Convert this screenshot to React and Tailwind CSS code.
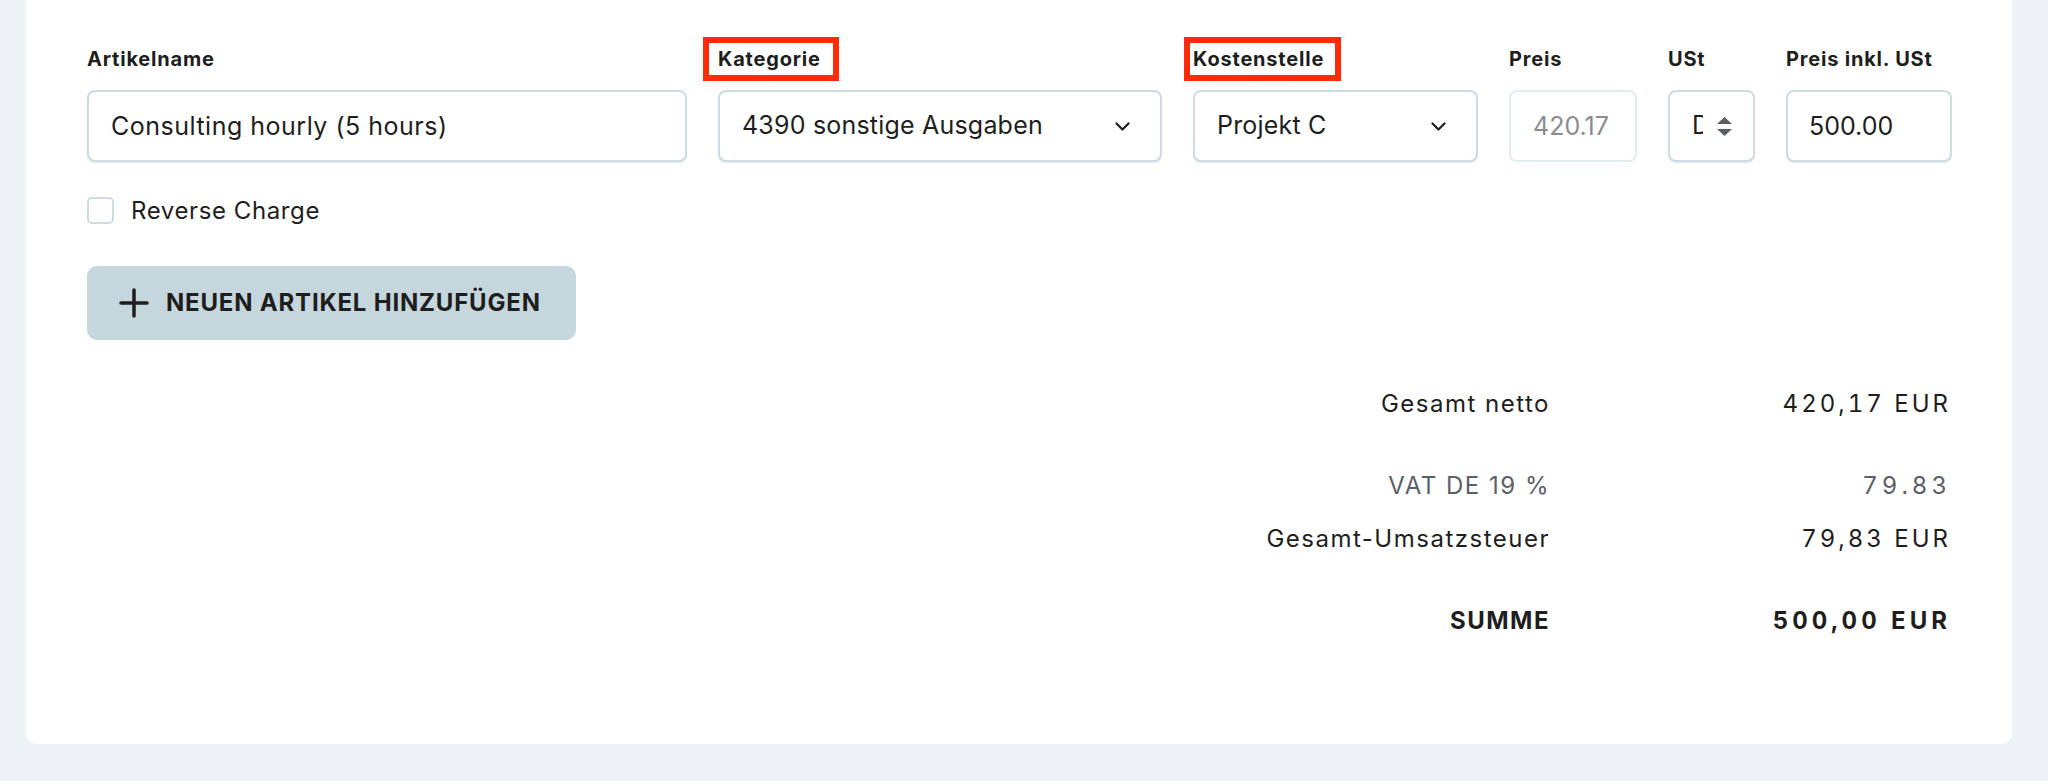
import React from 'react';

const font = { fontFamily: 'Inter, "Open Sans", sans-serif' };

const Chevron = () => (
  <svg width="15" height="9" viewBox="0 0 15 9" fill="none">
    <path d="M1.5 1.5l6 6 6-6" stroke="#1e1e1e" strokeWidth="2.2" strokeLinecap="round" strokeLinejoin="round" />
  </svg>
);

const Label = ({ children, marked, markClass }) => (
  <div className="h-[28px] mb-[17px] flex">
    <span className="relative text-[20px] leading-[28px] font-bold text-[#1e1e1e] tracking-[0.8px]">
      {children}
      {marked && <span className={`absolute -top-[8px] -bottom-[8px] border-[6px] border-[#ff2a06] ${markClass}`} />}
    </span>
  </div>
);

const Field = ({ width, label, marked, markClass, children }) => (
  <div className={`flex flex-col shrink-0 ${width}`}>
    <Label marked={marked} markClass={markClass}>{label}</Label>
    {children}
  </div>
);

const boxClass = 'h-[72px] rounded-[8px] border-2 border-[#cddce1] bg-white shadow-[0_1px_1px_rgba(160,185,195,0.35)]';

const SelectBox = ({ value }) => (
  <div className={`${boxClass} flex items-center justify-between pl-[22px] pr-[30px]`}>
    <span className="text-[25px] text-[#1e1e1e] tracking-[0.2px]">{value}</span>
    <Chevron />
  </div>
);

const TotalRow = ({ label, value, className = '', valueClass = 'tracking-[3px]' }) => (
  <div className={`flex items-center h-[36px] text-[24px] leading-[36px] ${className}`}>
    <div className="flex-1 text-right tracking-[1.5px]">{label}</div>
    <div className={`w-[401px] text-right tabular-nums ${valueClass}`}>{value}</div>
  </div>
);

const App = () => {
  return (
    <div className="w-full h-[781px] bg-[#edf2f5] pl-[26px] pr-[36px]" style={font}>
      <div className="bg-white rounded-b-[10px] h-[744px] pt-[45px] px-[61px]">
        <div className="flex gap-[31px]">
          <Field width="w-[600px]" label="Artikelname">
            <input
              readOnly
              value="Consulting hourly (5 hours)"
              className={`${boxClass} w-full px-[22px] text-[25px] text-[#1e1e1e] tracking-[0.5px] outline-none`}
            />
          </Field>
          <Field width="w-[444px]" label="Kategorie" marked markClass="-left-[15px] -right-[18px]">
            <SelectBox value="4390 sonstige Ausgaben" />
          </Field>
          <Field width="w-[285px]" label="Kostenstelle" marked markClass="-left-[9px] -right-[17px]">
            <SelectBox value="Projekt C" />
          </Field>
          <Field width="w-[128px]" label="Preis">
            <input
              readOnly
              value="420.17"
              className="h-[72px] w-full rounded-[8px] border-2 border-[#e2edf0] bg-white px-[22px] text-[25px] text-[#8c8c8c] outline-none"
            />
          </Field>
          <Field width="w-[87px]" label="USt">
            <div className={`${boxClass} flex items-center pl-[22px] gap-[14px]`}>
              <div className="w-[11px] overflow-hidden text-[25px] text-[#1e1e1e] whitespace-nowrap">DE 19 %</div>
              <svg width="15" height="19" viewBox="0 0 15 19">
                <path d="M7.5 0L15 7H0z" fill="#5b5e63" />
                <path d="M7.5 19L15 12H0z" fill="#5b5e63" />
              </svg>
            </div>
          </Field>
          <Field width="w-[166px]" label="Preis inkl. USt">
            <input
              readOnly
              value="500.00"
              className={`${boxClass} w-full px-[21px] text-[25px] text-[#1e1e1e] outline-none`}
            />
          </Field>
        </div>

        <label className="flex items-center gap-[17px] mt-[35px] h-[27px]">
          <span className="w-[27px] h-[27px] rounded-[5px] border-2 border-[#cddce1] bg-white" />
          <span className="text-[24px] text-[#1e1e1e] tracking-[0.6px]">Reverse Charge</span>
        </label>

        <button className="mt-[42px] w-[489px] h-[74px] rounded-[10px] bg-[#c5d7dd] flex items-center pl-[32px] gap-[17px]">
          <svg width="30" height="30" viewBox="0 0 30 30">
            <path d="M15 2v26M2 15h26" stroke="#1e1e1e" strokeWidth="3.5" strokeLinecap="round" />
          </svg>
          <span className="text-[24px] font-bold text-[#1e1e1e] tracking-[0.8px]">NEUEN ARTIKEL HINZUFÜGEN</span>
        </button>

        <div className="mt-[46px] text-[#1e1e1e]">
          <TotalRow label="Gesamt netto" value="420,17 EUR" />
          <TotalRow label="VAT DE 19 %" value="79.83" className="mt-[46px] text-[#5b6068]" valueClass="tracking-[4px]" />
          <TotalRow label="Gesamt-Umsatzsteuer" value="79,83 EUR" className="mt-[17px]" />
          <TotalRow label="SUMME" value="500,00 EUR" className="mt-[46px] font-bold" valueClass="tracking-[4px]" />
        </div>
      </div>
    </div>
  );
};

export default App;
